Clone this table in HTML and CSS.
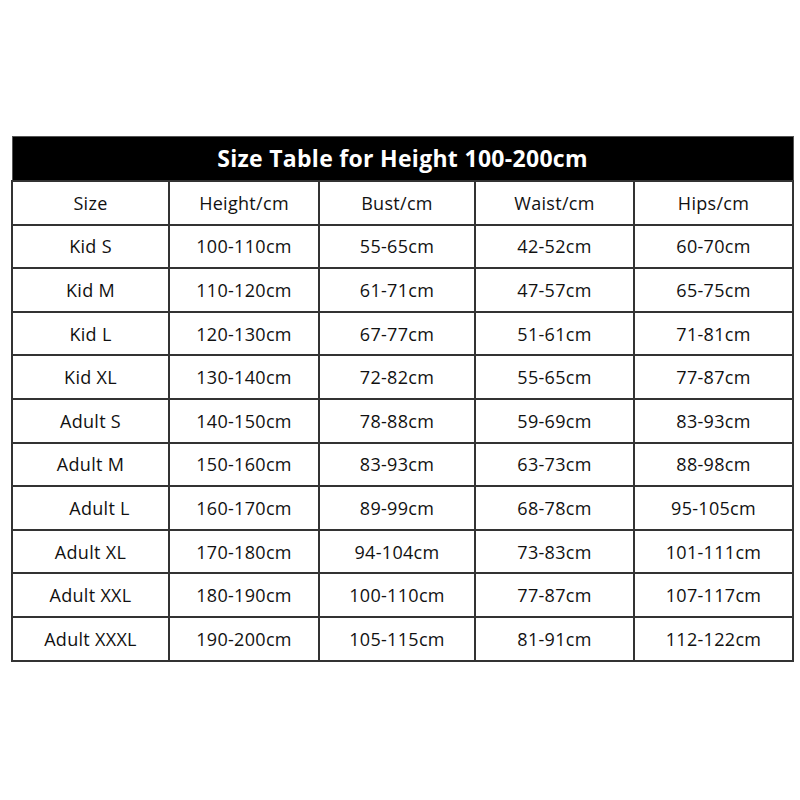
FILE: index.html
```html
<!DOCTYPE html>
<html>
<head>
<meta charset="utf-8">
<link rel="stylesheet" href="styles.css">
</head>
<body>
<div class="page">
<table class="size-table">
<colgroup>
<col class="c1"><col class="c2"><col class="c3"><col class="c4"><col class="c5">
</colgroup>
<thead>
<tr><th colspan="5" class="title">Size Table for Height 100-200cm</th></tr>
</thead>
<tbody>
<tr><td>Size</td><td>Height/cm</td><td>Bust/cm</td><td>Waist/cm</td><td>Hips/cm</td></tr>
<tr><td>Kid S</td><td>100-110cm</td><td>55-65cm</td><td>42-52cm</td><td>60-70cm</td></tr>
<tr><td>Kid M</td><td>110-120cm</td><td>61-71cm</td><td>47-57cm</td><td>65-75cm</td></tr>
<tr><td>Kid L</td><td>120-130cm</td><td>67-77cm</td><td>51-61cm</td><td>71-81cm</td></tr>
<tr><td>Kid XL</td><td>130-140cm</td><td>72-82cm</td><td>55-65cm</td><td>77-87cm</td></tr>
<tr><td>Adult S</td><td>140-150cm</td><td>78-88cm</td><td>59-69cm</td><td>83-93cm</td></tr>
<tr><td>Adult M</td><td>150-160cm</td><td>83-93cm</td><td>63-73cm</td><td>88-98cm</td></tr>
<tr><td class="shift">Adult L</td><td>160-170cm</td><td>89-99cm</td><td>68-78cm</td><td>95-105cm</td></tr>
<tr><td>Adult XL</td><td>170-180cm</td><td>94-104cm</td><td>73-83cm</td><td>101-111cm</td></tr>
<tr><td>Adult XXL</td><td>180-190cm</td><td>100-110cm</td><td>77-87cm</td><td>107-117cm</td></tr>
<tr><td>Adult XXXL</td><td>190-200cm</td><td>105-115cm</td><td>81-91cm</td><td>112-122cm</td></tr>
</tbody>
</table>
</div>
</body>
</html>
```
FILE: styles.css
```css
html, body {
  margin: 0;
  padding: 0;
  background: #ffffff;
}
.page {
  width: 800px;
  height: 800px;
  padding: 136px 0 0 11px;
  box-sizing: border-box;
}
.size-table {
  border-collapse: collapse;
  table-layout: fixed;
  width: 781px;
  font-family: "Open Sans", "Noto Sans", sans-serif;
  color: #111;
}
.c1 { width: 157px; }
.c2 { width: 150px; }
.c3 { width: 156px; }
.c4 { width: 159px; }
.c5 { width: 159px; }
.size-table th.title {
  background: #000;
  color: #fff;
  font-weight: 700;
  font-size: 23px;
  letter-spacing: 0.3px;
  height: 41px;
  padding: 0 0 2px 0;
  border: 1px solid #555;
  text-align: center;
  vertical-align: middle;
}
.size-table td {
  border: 2px solid #333;
  height: 41.6px;
  padding: 0;
  text-align: center;
  vertical-align: middle;
  font-size: 18px;
  letter-spacing: 0.3px;
}
.size-table td.shift {
  padding-left: 18px;
}
```
